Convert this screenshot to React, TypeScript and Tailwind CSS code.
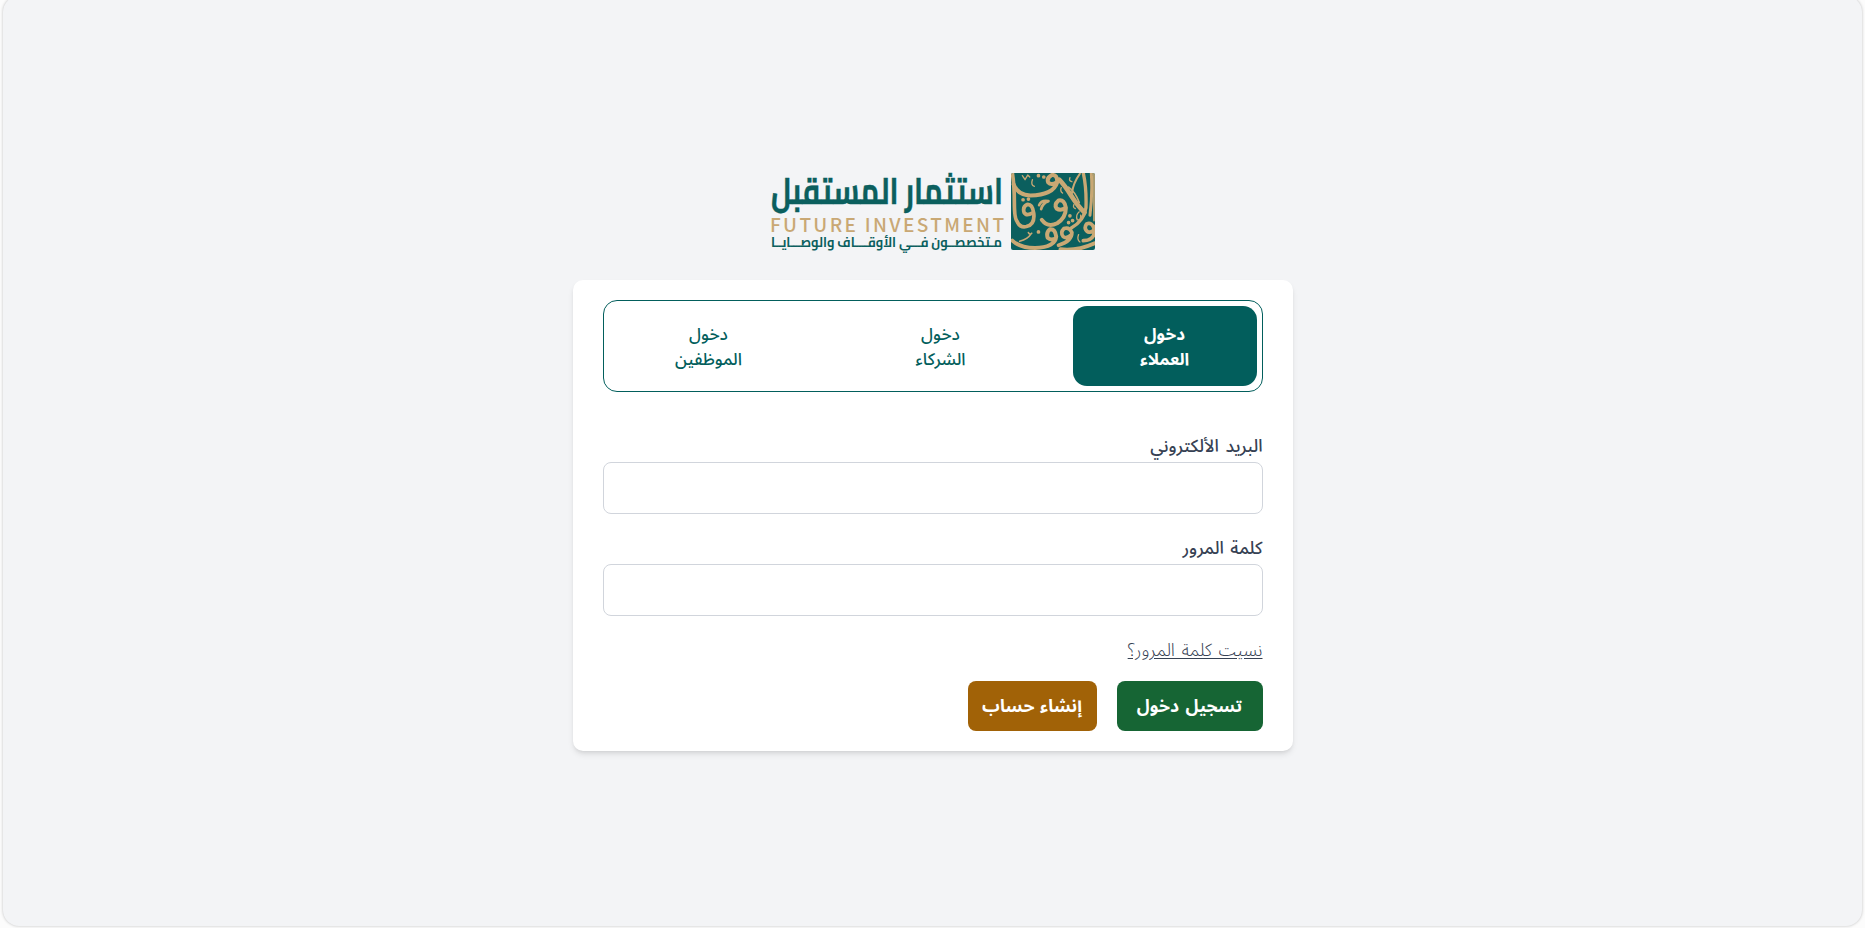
function Wordmark() {
  return (
    <svg viewBox="771 173 231 77" className="h-[77px] w-[231px] overflow-visible" direction="rtl">
      <text x="1003" y="203.500" textLength="232" lengthAdjust="spacingAndGlyphs" fill="#0b5f5e" stroke="#0b5f5e" strokeWidth="0.4" fontSize="37" fontWeight="700" fontFamily='Cairo, "Noto Kufi Arabic", "Noto Sans Arabic", sans-serif'>
        استثمار المستقبل
      </text>
      <text x="770" y="231.500" direction="ltr" textLength="234" fill="#c9a874" fontSize="19" fontWeight="500" fontFamily='"Noto Sans CJK SC", "Noto Sans", sans-serif'>
        FUTURE INVESTMENT
      </text>
      <text x="1002" y="246.500" textLength="231" lengthAdjust="spacingAndGlyphs" fill="#0b5f5e" fontSize="13.500" fontWeight="700" fontFamily='Cairo, "Noto Kufi Arabic", "Noto Sans Arabic", sans-serif'>
        مـتخصصــون فـــي الأوقــــاف والوصـــايــا
      </text>
    </svg>
  );
}

function Emblem() {
  return (
    <svg viewBox="34 24 251 230" preserveAspectRatio="none" className="h-[77px] w-[84px] rounded-[2px] bg-[#0b5f5e]" fill="none" stroke="#c9a874" strokeWidth="11" strokeLinecap="round" strokeLinejoin="round">
      <path d="M38 24 Q44 60 44 110 T52 168 Q60 188 80 184 Q106 178 102 144 Q98 116 82 118 Q68 124 73 142 Q80 154 99 143" />
      <path d="M42 58 Q54 90 92 91 Q160 90 172 52 Q173 28 156 30 Q140 38 145 52 Q154 62 170 52" strokeWidth="12" />
      <path d="M118 120 Q124 104 146 108 Q128 114 124 132" strokeWidth="8" />
      <path d="M126 164 Q144 188 172 174 Q198 158 198 128 Q194 102 176 106 Q162 118 170 130 Q182 138 197 128" strokeWidth="12" />
      <path d="M178 44 Q194 60 214 92 Q236 126 254 142" strokeWidth="14" />
      <path d="M206 66 Q226 80 238 112" strokeWidth="5" />
      <path d="M250 24 Q260 70 258 128 Q252 168 214 188" strokeWidth="10" />
      <path d="M274 24 Q278 90 270 150" strokeWidth="9" />
      <path d="M282 24 V166" strokeWidth="5" />
      <path d="M216 84 Q220 54 240 26" strokeWidth="6" />
      <path d="M282 190 Q276 170 260 176 Q250 190 264 200 Q282 204 283 184 M284 200 Q280 226 250 226" />
      <path d="M38 226 Q62 248 106 248 Q166 246 169 214 Q166 190 150 192 Q138 202 144 218 Q152 226 167 220" strokeWidth="12" />
      <path d="M176 240 Q216 228 216 202 Q208 184 192 190 Q180 202 190 214 Q200 222 215 208" />
      <path d="M182 252 Q230 258 284 234" strokeWidth="12" />
      <path d="M60 228 Q84 222 94 206 M86 202 Q90 210 96 204" strokeWidth="5" />
      <path d="M98 44 Q92 60 104 64 M210 38 Q206 48 216 50 M236 208 Q230 224 240 230 M184 68 Q180 78 188 84 M222 118 Q218 128 226 130" strokeWidth="4" />
      <path d="M238 140 Q226 150 232 164 Q244 166 242 150" strokeWidth="4" />
      <path d="M68 32 L76 44 L84 30 L90 36" strokeWidth="4" />
      <path d="M116 32h.1M132 36h.1M70 104h.1M86 102h.1M116 200h.1M210 152h.1M218 166h.1M206 172h.1" strokeWidth="11" />
    </svg>
  );
}

const tabs = [
  { name: "العملاء", look: "w-[184px] bg-[#025e5c] font-bold text-white" },
  { name: "الشركاء", look: "w-[264px] font-medium text-[#025e5c]" },
  { name: "الموظفين", look: "w-[200px] font-medium text-[#025e5c]" },
];

function Field({ id, label, type }: { id: string; label: string; type: string }) {
  return (
    <div className="h-[102px]">
      <label htmlFor={id} className="block h-[29px] text-[17.5px] leading-[28px] font-medium text-gray-700 [word-spacing:2px]">
        {label}
      </label>
      <input id={id} type={type} className="block h-[52px] w-full rounded-lg border border-gray-300 bg-white px-4 outline-none" />
    </div>
  );
}

export default function App() {
  return (
    <div dir="rtl" className="h-[928px] overflow-hidden bg-[#fcfcfc] font-['Noto_Sans_Arabic','Noto_Sans',sans-serif]">
      <main className="mx-[3px] -mt-[4px] flex h-[930px] flex-col items-center rounded-2xl bg-gray-100 pt-[177px] shadow-[0_0_3px_rgba(0,0,0,0.25)]">
        <div className="flex gap-[9px]">
          <Emblem />
          <Wordmark />
        </div>
        <section className="mt-[30px] h-[471px] w-[720px] rounded-[10px] bg-white px-[30px] pt-5 shadow-md">
          <div className="flex h-[92px] rounded-[14px] border border-[#025e5c] p-[5px]">
            {tabs.map(({ name, look }) => (
              <button
                key={name}
                type="button"
                className={`flex shrink-0 flex-col items-center justify-center rounded-[14px] pt-[4px] text-[17px] leading-[25px] ${look}`}
              >
                <span>دخول</span>
                <span>{name}</span>
              </button>
            ))}
          </div>
          <form className="pt-[41px]">
            <Field id="email" label="البريد الألكتروني" type="email" />
            <Field id="password" label="كلمة المرور" type="password" />
            <a href="#" className="block h-[44px] w-fit text-[17.5px] leading-[28px] font-light text-gray-700 underline underline-offset-2 [word-spacing:2px]">
              نسيت كلمة المرور؟
            </a>
            <div className="flex gap-5">
              <button type="button" className="h-[50px] w-[146px] rounded-lg bg-[#166534] pt-[2px] text-[17.5px] leading-[28px] font-bold text-white [word-spacing:2px]">
                تسجيل دخول
              </button>
              <button type="button" className="h-[50px] w-[129px] rounded-lg bg-[#a16207] pt-[2px] text-[17.5px] leading-[28px] font-bold text-white [word-spacing:1px]">
                إنشاء حساب
              </button>
            </div>
          </form>
        </section>
      </main>
    </div>
  );
}
